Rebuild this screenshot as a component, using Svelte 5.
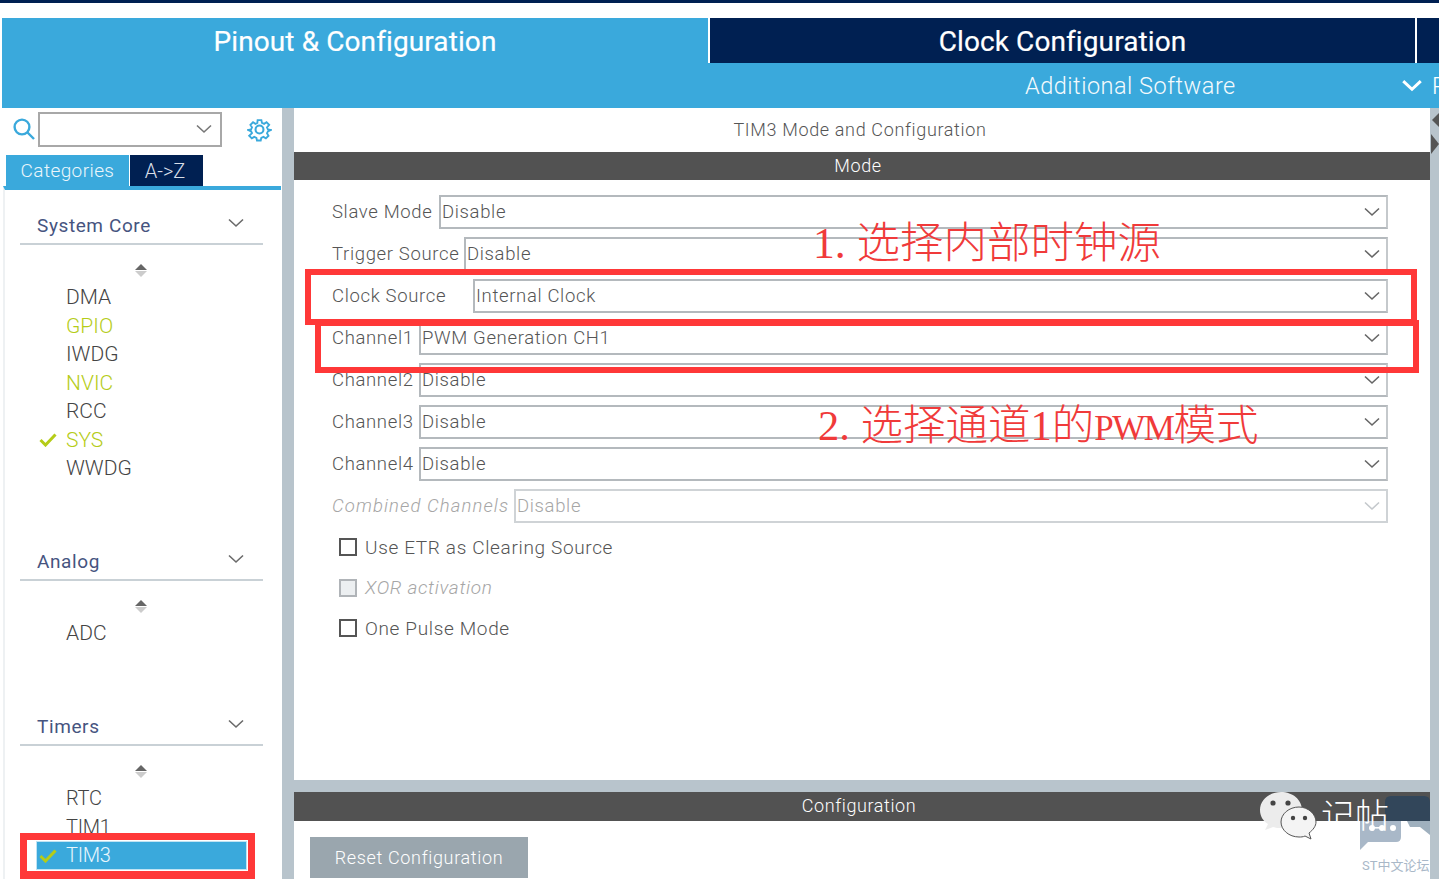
<script>
  let rows = [
    { label: "Slave Mode", value: "Disable", w: 107 },
    { label: "Trigger Source", value: "Disable", w: 132 },
    { label: "Clock Source", value: "Internal Clock", w: 141 },
    { label: "Channel1", value: "PWM Generation CH1", w: 87 },
    { label: "Channel2", value: "Disable", w: 87 },
    { label: "Channel3", value: "Disable", w: 87 },
    { label: "Channel4", value: "Disable", w: 87 },
    { label: "Combined Channels", value: "Disable", w: 182, off: true },
  ];

  let checks = [
    { label: "Use ETR as Clearing Source" },
    { label: "XOR activation", off: true },
    { label: "One Pulse Mode" },
  ];

  let groups = [
    {
      name: "System Core",
      cls: "g-core",
      items: [
        { name: "DMA" },
        { name: "GPIO", tone: "lime" },
        { name: "IWDG" },
        { name: "NVIC", tone: "lime" },
        { name: "RCC" },
        { name: "SYS", tone: "lime", check: true },
        { name: "WWDG" },
      ],
    },
    { name: "Analog", cls: "g-analog", items: [{ name: "ADC" }] },
    {
      name: "Timers",
      cls: "g-timers",
      items: [
        { name: "RTC" },
        { name: "TIM1" },
        { name: "TIM3", check: true, selected: true },
      ],
    },
  ];
</script>

{#snippet chevron(cls, sw = 1.6)}
  <svg class={cls} viewBox="0 0 16 10" fill="none">
    <path d="M1 1.5 L8 8 L15 1.5" stroke="currentColor" stroke-width={sw} />
  </svg>
{/snippet}

{#snippet checkmark()}
  <svg class="tick" viewBox="0 0 18 14" width="18" height="14" fill="none">
    <path d="M1.5 7 L6.5 12 L16.5 1.5" stroke="#b5cc18" stroke-width="3" />
  </svg>
{/snippet}

<div class="page">
  <div class="topline"></div>

  <div class="tabs">
    <div class="tab pinout">Pinout &amp; Configuration</div>
    <div class="tab clock">Clock Configuration</div>
    <div class="tab rest"></div>
  </div>

  <div class="subbar">
    <span class="additional">Additional Software</span>
    {@render chevron("sub-chevron", 2.4)}
    <span class="cut">R</span>
  </div>

  <div class="body">
    <aside class="sidebar">
      <div class="search">
        <svg viewBox="0 0 24 24" width="24" height="24" fill="none" stroke="#3aa9dc" stroke-width="2.4">
          <circle cx="10" cy="10" r="7.4" />
          <path d="M15.5 15.5 L22 22" />
        </svg>
        <div class="search-box">{@render chevron("box-chevron")}</div>
        <svg class="gear" viewBox="0 0 24 24" width="25" height="25" fill="none" stroke="#3aa9dc" stroke-width="2">
          <path d="M10 2h4l.6 3 2.3 1 2.6-1.7 2.8 2.8L20 9.7l1 2.3 3 .6v0l-3 1.4-1 1.9 1.6 2.8-2.8 2.8-2.6-1.6-2.3 1-.6 2.8h-4l-.6-2.8-2.3-1-2.6 1.6-2.8-2.8L4 15.9 3 13.9l-3-1.3 3-.6 1-2.3-1.7-2.6 2.8-2.8L7.7 6l2-1z" transform="translate(1.2 1.2) scale(.9)" />
          <circle cx="12" cy="12" r="3.8" />
        </svg>
      </div>

      <div class="side-tabs">
        <div class="side-tab on">Categories</div>
        <div class="side-tab">A-&gt;Z</div>
      </div>

      <div class="side-list">
        {#each groups as g}
          <section class="group {g.cls}">
            <div class="group-head">
              <span>{g.name}</span>
              {@render chevron("group-chevron")}
            </div>
            <div class="sorter"><i class="up"></i><i class="down"></i></div>
            {#each g.items as it}
              <div class="item {it.tone ?? ''}" class:selected={it.selected}>
                {#if it.check}{@render checkmark()}{/if}
                {it.name}
              </div>
            {/each}
          </section>
        {/each}
      </div>
    </aside>

    <div class="gutter"></div>

    <main class="content">
      <section class="mode-panel">
        <div class="panel-title">TIM3 Mode and Configuration</div>
        <div class="bar">Mode</div>
        <div class="form">
          {#each rows as r}
            <div class="row" class:off={r.off}>
              <span class="label" style="width: {r.w}px">{r.label}</span>
              <div class="select">
                <span>{r.value}</span>
                {@render chevron("sel-chevron")}
              </div>
            </div>
          {/each}
          <div class="checks">
            {#each checks as c}
              <div class="check" class:off={c.off}><i class="box"></i>{c.label}</div>
            {/each}
          </div>
        </div>
      </section>

      <section class="config-panel">
        <div class="bar config-bar">Configuration</div>
        <div class="reset">Reset Configuration</div>
      </section>
    </main>

    <div class="right-gutter">
      <i class="arrow-l"></i>
      <i class="arrow-r"></i>
    </div>
  </div>

  <!-- annotations pasted on top of the screenshot -->
  <div class="note note-1">1. 选择内部时钟源</div>
  <div class="note note-2">2. 选择通道1的<span class="narrow">PWM</span>模式</div>
  <div class="mark mark-clock"></div>
  <div class="mark mark-channel"></div>
  <div class="mark mark-tim3"></div>

  <div class="st-logo">
    <svg viewBox="0 0 70 56" width="70" height="56">
      <path d="M25 25V6q0-6 6-6h33q6 0 6 6v19z" fill="#32465a" />
      <path d="M47 25h23v14l-10-8H50z" fill="#9fb0be" />
      <path d="M0 25h41v16q0 5-5 5H8L0 54z" fill="#a9b8c8" />
      <circle cx="12" cy="32" r="3" fill="#fff" />
      <circle cx="22" cy="32" r="3" fill="#fff" />
      <circle cx="33" cy="32" r="3" fill="#fff" />
    </svg>
    <span>ST中文论坛</span>
  </div>

  <div class="wechat">
    <svg viewBox="0 0 58 50" width="58" height="50">
      <path d="M22 1C10 1 1 9 1 19c0 6 3 11 8 14l-3 6 8-3c3 1 5 1 8 1 12 0 21-8 21-18S34 1 22 1z" fill="#ececec" />
      <path d="M40 16c-10 0-18 7-18 15s8 15 18 15c2 0 4 0 6-1l6 3-2-6c4-3 7-7 7-11 0-8-8-15-17-15z" fill="#f4f4f4" stroke="#555" stroke-width="1" />
      <circle cx="14" cy="12" r="2.6" fill="#444" />
      <circle cx="29" cy="12" r="2.6" fill="#444" />
      <circle cx="34" cy="27" r="2.2" fill="#444" />
      <circle cx="46" cy="27" r="2.2" fill="#444" />
    </svg>
    <span>记帖</span>
  </div>
</div>

<style>
  :global(body) {
    margin: 0;
    background: #fff;
  }
  .page {
    position: relative;
    width: 1439px;
    height: 879px;
    overflow: hidden;
    background: #fff;
    font-family: Roboto, "Noto Sans CJK SC", sans-serif;
    display: flex;
    flex-direction: column;
  }
  .topline {
    height: 3px;
    background: #002052;
    margin-bottom: 15px;
  }
  .tabs {
    display: flex;
    height: 45px;
    padding-left: 2px;
    gap: 2px;
  }
  .tab {
    color: #fff;
    font-size: 28px;
    line-height: 47px;
    text-align: center;
    letter-spacing: 0.1px;
    -webkit-text-stroke: 0.2px #fff;
  }
  .pinout {
    width: 706px;
    background: #3aa9dc;
  }
  .clock {
    width: 705px;
    background: #002052;
  }
  .rest {
    flex: 1;
    background: #002052;
  }
  .subbar {
    height: 45px;
    margin-left: 2px;
    background: #3aa9dc;
    display: flex;
    align-items: center;
    color: #fff;
    font-size: 23.5px;
    font-weight: 300;
    letter-spacing: 0.5px;
  }
  .additional {
    margin-left: 1023px;
    width: 377px;
    flex: none;
    opacity: 0.95;
  }
  .sub-chevron {
    width: 20px;
    height: 13px;
    color: #fff;
    flex: none;
  }
  .cut {
    margin-left: 10px;
    flex: none;
  }
  .body {
    flex: 1;
    display: flex;
    min-height: 0;
  }
  .sidebar {
    width: 282px;
    flex: none;
    display: flex;
    flex-direction: column;
  }
  .search {
    height: 47px;
    display: flex;
    align-items: center;
    padding-left: 12px;
    box-sizing: border-box;
    padding-bottom: 5px;
  }
  .search-box {
    width: 184px;
    height: 35px;
    margin-left: 2px;
    box-sizing: border-box;
    border: 2px solid #a8a8a8;
    background: #fff;
    display: flex;
    align-items: center;
    justify-content: flex-end;
    padding-right: 8px;
    color: #777;
  }
  .box-chevron {
    width: 16px;
    height: 10px;
  }
  .gear {
    margin-left: 25px;
  }
  .side-tabs {
    display: flex;
    margin-left: 6px;
    height: 31px;
    gap: 1px;
    width: 275px;
    box-sizing: border-box;
  }
  .side-tab {
    background: #002052;
    color: #d8dfe8;
    width: 73px;
    text-align: center;
    font-size: 20px;
    font-weight: 300;
    line-height: 32px;
    padding-right: 3px;
    box-sizing: border-box;
  }
  .side-tab.on {
    width: 123px;
    background: #3aa9dc;
    color: #eaf6fb;
    font-size: 19px;
    letter-spacing: 0.4px;
    padding-right: 0;
  }
  .side-list {
    flex: 1;
    margin-left: 3px;
    margin-right: 1px;
    border-top: 4px solid #3aa9dc;
    border-left: 2px solid #eef1f3;
    box-sizing: border-box;
    overflow: hidden;
  }
  .group {
    padding: 20px 15px 0;
    box-sizing: border-box;
  }
  .g-core {
    height: 336px;
  }
  .g-analog {
    height: 165px;
  }
  .group-head {
    height: 35px;
    border-bottom: 2px solid #c9d1d6;
    color: #46547f;
    font-size: 19px;
    letter-spacing: 0.6px;
    display: flex;
    align-items: flex-start;
    justify-content: space-between;
    line-height: 31px;
    padding-left: 17px;
    padding-right: 19px;
    box-sizing: border-box;
    width: 243px;
  }
  .group-chevron {
    width: 16px;
    height: 10px;
    color: #6a6a6a;
    margin-top: 8px;
  }
  .sorter {
    width: 241px;
    height: 32px;
    display: flex;
    flex-direction: column;
    align-items: center;
    justify-content: flex-end;
    gap: 1px;
    margin-bottom: 6px;
  }
  .sorter .up {
    border: 6px solid transparent;
    border-top: 0;
    border-bottom: 6px solid #666;
  }
  .sorter .down {
    border: 6px solid transparent;
    border-bottom: 0;
    border-top: 6px solid #ccc;
  }
  .item {
    position: relative;
    height: 28.5px;
    line-height: 28.5px;
    padding-left: 46px;
    font-size: 21px;
    font-weight: 300;
    color: #444;
  }
  .g-timers .item {
    font-size: 20px;
    letter-spacing: -0.3px;
  }
  .item.lime {
    color: #b5cc18;
  }
  .tick {
    position: absolute;
    left: 19px;
    top: 7px;
  }
  .item.selected {
    background: #3aa9dc;
    color: #e8f6fc;
    outline: 1px solid #bfe3f3;
    outline-offset: -1px;
    margin-left: 16px;
    width: 211px;
    height: 29px;
    box-sizing: border-box;
    padding-left: 30px;
    line-height: 28px;
  }
  .item.selected .tick {
    left: 3px;
    top: 8px;
  }
  .gutter {
    width: 12px;
    flex: none;
    background: #b8c4cc;
  }
  .content {
    flex: 1;
    min-width: 0;
    display: flex;
    flex-direction: column;
    background: #b8c4cc;
    gap: 12px;
  }
  .mode-panel {
    height: 672px;
    background: #fff;
    flex: none;
  }
  .panel-title {
    height: 44px;
    line-height: 44px;
    text-align: center;
    font-size: 18px;
    font-weight: 300;
    letter-spacing: 0.65px;
    color: #555;
    box-sizing: border-box;
    padding-right: 4px;
  }
  .bar {
    height: 28px;
    line-height: 28px;
    background: #525252;
    color: #fff;
    text-align: center;
    font-size: 18px;
    font-weight: 300;
    letter-spacing: 0.6px;
    padding-right: 8px;
  }
  .form {
    padding: 15px 42px 0 38px;
  }
  .row {
    display: flex;
    height: 34px;
    margin-bottom: 8px;
    align-items: center;
    color: #555;
    font-size: 18.5px;
    font-weight: 300;
    letter-spacing: 0.65px;
    line-height: 36px;
  }
  .label {
    white-space: nowrap;
    flex: none;
  }
  .select {
    flex: 1;
    height: 34px;
    box-sizing: border-box;
    border: 2px solid #b4b9bd;
    border-right-color: #c5c9cc;
    display: flex;
    align-items: center;
    justify-content: space-between;
    padding: 0 2px 0 1px;
    color: #555;
  }
  .sel-chevron {
    width: 16px;
    height: 10px;
    color: #666;
    margin-right: 4px;
    flex: none;
  }
  .row.off {
    color: #a6a6a6;
  }
  .row.off .label {
    font-style: italic;
    letter-spacing: 1.1px;
  }
  .row.off .select {
    color: #a6a6a6;
    border-color: #cfd3d6;
  }
  .row.off .sel-chevron {
    color: #c4c8cc;
  }
  .checks {
    margin-top: -4px;
    padding-left: 7px;
  }
  .check {
    height: 40.5px;
    display: flex;
    align-items: center;
    gap: 8px;
    font-size: 19px;
    font-weight: 300;
    letter-spacing: 0.65px;
    color: #555;
  }
  .check .box {
    width: 18px;
    height: 18px;
    box-sizing: border-box;
    border: 2px solid #555;
    background: #fff;
  }
  .check.off {
    color: #a6a6a6;
    font-style: italic;
  }
  .check.off .box {
    border-color: #b0b4b8;
    background: #eceff1;
  }
  .config-panel {
    flex: 1;
    background: #fff;
  }
  .config-bar {
    height: 29px;
    padding-right: 6px;
  }
  .reset {
    width: 218px;
    height: 41px;
    line-height: 41px;
    margin: 16px 0 0 16px;
    background: #9aa6ae;
    color: #fff;
    text-align: center;
    font-size: 18px;
    font-weight: 300;
    letter-spacing: 0.65px;
  }
  .right-gutter {
    width: 9px;
    flex: none;
    background: #b8c4cc;
    position: relative;
    overflow: hidden;
  }
  .arrow-l {
    position: absolute;
    left: 2px;
    top: 4px;
    border: 8px solid transparent;
    border-left: 0;
    border-right: 8px solid #555;
  }
  .arrow-r {
    position: absolute;
    left: 1px;
    top: 26px;
    border: 10px solid transparent;
    border-right: 0;
    border-left: 8px solid #555;
  }
  .note {
    position: absolute;
    color: #f03a3a;
    font-family: "Liberation Serif", "Noto Sans CJK SC", serif;
    font-weight: 300;
    line-height: 48px;
    white-space: nowrap;
  }
  .note-1 {
    left: 813px;
    top: 219px;
    font-size: 43.5px;
  }
  .note-2 {
    left: 818px;
    top: 402px;
    font-size: 42.5px;
  }
  .narrow {
    font-size: 35px;
    letter-spacing: -1.5px;
  }
  .mark {
    position: absolute;
    box-sizing: border-box;
    border: 6px solid #ff3838;
  }
  .mark-clock {
    left: 305px;
    top: 269px;
    width: 1112px;
    height: 56px;
  }
  .mark-channel {
    left: 315px;
    top: 320px;
    width: 1104px;
    height: 53px;
  }
  .mark-tim3 {
    left: 20px;
    top: 833px;
    width: 235px;
    height: 46px;
    border-width: 7px 7px 8px;
  }
  .wechat {
    position: absolute;
    left: 1259px;
    top: 789px;
    display: flex;
    align-items: center;
    gap: 4px;
    color: #fff;
    font-size: 34px;
    font-weight: 300;
    line-height: 54px;
  }
  .st-logo {
    position: absolute;
    left: 1360px;
    top: 796px;
    width: 72px;
    height: 80px;
    font-size: 13px;
    color: #a9b8c8;
  }
  .st-logo svg {
    display: block;
  }
  .st-logo span {
    position: absolute;
    left: 2px;
    top: 59px;
    white-space: nowrap;
  }
</style>
